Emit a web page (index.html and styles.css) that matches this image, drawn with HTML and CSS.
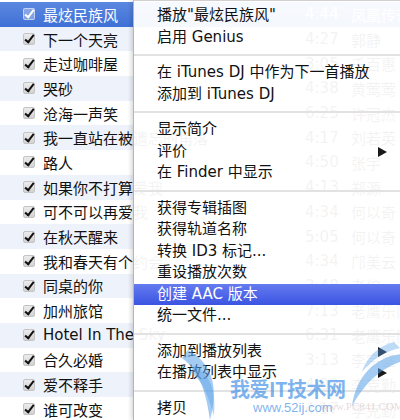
FILE: index.html
```html
<!DOCTYPE html>
<html>
<head>
    <meta charset="utf-8">
    <title>iTunes</title>
    <link rel="stylesheet" href="styles.css">
</head>
<body>
    <div id="songs">
        <div class="row selected"><span class="check"></span><span class="name">最炫民族风</span><span class="time">4:44</span><span class="artist">凤凰传奇</span></div>
        <div class="row"><span class="check"></span><span class="name">下一个天亮</span><span class="time">4:27</span><span class="artist">郭静</span></div>
        <div class="row"><span class="check"></span><span class="name">走过咖啡屋</span><span class="time">3:05</span><span class="artist">千百惠</span></div>
        <div class="row"><span class="check"></span><span class="name">哭砂</span><span class="time">4:38</span><span class="artist">黄莺莺</span></div>
        <div class="row"><span class="check"></span><span class="name">沧海一声笑</span><span class="time">6:25</span><span class="artist">许冠杰</span></div>
        <div class="row"><span class="check"></span><span class="name">我一直站在被遗忘的角落</span><span class="time">4:17</span><span class="artist">刘若英</span></div>
        <div class="row"><span class="check"></span><span class="name">路人</span><span class="time">4:50</span><span class="artist">张宇</span></div>
        <div class="row"><span class="check"></span><span class="name">如果你不打算爱我</span><span class="time">4:13</span><span class="artist">郑源</span></div>
        <div class="row"><span class="check"></span><span class="name">可不可以再爱我</span><span class="time">4:34</span><span class="artist">何以奇</span></div>
        <div class="row"><span class="check"></span><span class="name">在秋天醒来</span><span class="time">5:05</span><span class="artist">何以奇</span></div>
        <div class="row"><span class="check"></span><span class="name">我和春天有个约会</span><span class="time">4:34</span><span class="artist">邝美云</span></div>
        <div class="row"><span class="check"></span><span class="name">同桌的你</span><span class="time">3:48</span><span class="artist">老狼</span></div>
        <div class="row"><span class="check"></span><span class="name">加州旅馆</span><span class="time">7:13</span><span class="artist">老鹰乐队</span></div>
        <div class="row"><span class="check"></span><span class="name">Hotel In The Sky</span><span class="time">6:31</span><span class="artist">老鹰乐队</span></div>
        <div class="row"><span class="check"></span><span class="name">合久必婚</span><span class="time">3:13</span><span class="artist">李宗盛</span></div>
        <div class="row"><span class="check"></span><span class="name">爱不释手</span><span class="time">4:02</span><span class="artist">李克勤</span></div>
        <div class="row"><span class="check"></span><span class="name">谁可改变</span><span class="time">4:17</span><span class="artist">李克勤</span></div>
    </div>

    <div id="menu">
        <div class="item">播放"最炫民族风"</div>
        <div class="item">启用 Genius</div>
        <div class="sep"></div>
        <div class="item">在 iTunes DJ 中作为下一首播放</div>
        <div class="item">添加到 iTunes DJ</div>
        <div class="sep"></div>
        <div class="item">显示简介</div>
        <div class="item sub">评价</div>
        <div class="item">在 Finder 中显示</div>
        <div class="sep"></div>
        <div class="item">获得专辑插图</div>
        <div class="item">获得轨道名称</div>
        <div class="item">转换 ID3 标记...</div>
        <div class="item">重设播放次数</div>
        <div class="item active">创建 AAC 版本</div>
        <div class="item">统一文件...</div>
        <div class="sep"></div>
        <div class="item sub">添加到播放列表</div>
        <div class="item sub">在播放列表中显示</div>
        <div class="sep"></div>
        <div class="item">拷贝</div>
    </div>

    <div id="mark">
        <svg class="wings" width="230" height="90" viewBox="0 0 230 90">
            <path d="M8 18 C30 30 40 52 30 88 C26 60 20 40 2 26 Z" fill="#5aa2ea" opacity="0.55"/>
            <path d="M14 34 C32 44 36 60 34 84 C28 64 24 50 10 40 Z" fill="#5aa2ea" opacity="0.45"/>
            <path d="M222 22 C196 24 176 44 172 74 C186 50 200 36 226 28 Z" fill="#5aa2ea" opacity="0.55"/>
            <path d="M214 10 C198 14 186 26 182 40 C194 26 204 20 220 16 Z" fill="#5aa2ea" opacity="0.4"/>
        </svg>
        <div class="mark-title">我爱IT技术网</div>
        <div class="mark-url">www.52ij.com</div>
        <div class="mark-other">www.PC841.COM</div>
    </div>
</body>
</html>
```

FILE: styles.css
```css
body {
    margin: 0;
    width: 400px;
    height: 420px;
    overflow: hidden;
    position: relative;
    background: #fff;
    color: #111;
    font-family: "DejaVu Sans", "Noto Sans CJK SC", sans-serif;
    font-size: 15px;
}
#songs {
    padding-top: 2px;
}
.row {
    display: flex;
    align-items: center;
    height: 24.7px;
    white-space: nowrap;
}
.row:nth-child(even) {
    background: #eef2fa;
}
.row.selected {
    background: linear-gradient(#5c88e0, #3f70d6);
    color: #fff;
}
.check {
    position: relative;
    flex: none;
    box-sizing: border-box;
    width: 12px;
    height: 12px;
    margin-left: 23px;
    margin-right: 8px;
    border: 1px solid #c4c4c4;
    border-radius: 2px;
    background: linear-gradient(#ececec, #d2d2d2);
}
.check::after {
    content: "";
    position: absolute;
    left: 3px;
    top: -1px;
    width: 3px;
    height: 8px;
    border: solid #111;
    border-width: 0 2.5px 2.5px 0;
    transform: rotate(38deg);
}
.selected .check {
    border-color: rgba(255, 255, 255, 0.5);
    background: rgba(255, 255, 255, 0.3);
}
.selected .check::after {
    border-color: #fff;
}
.name {
    flex: none;
    width: 262px;
    overflow: hidden;
}
.time {
    flex: none;
    width: 40px;
}
.artist {
    padding-left: 6px;
}

#menu {
    position: absolute;
    top: 0;
    left: 133px;
    width: 267px;
    height: 420px;
    box-sizing: border-box;
    padding-top: 4px;
    background: rgba(255, 255, 255, 0.95);
    border-left: 1px solid #b5b5b5;
    border-top: 1px solid #d0d0d0;
    box-shadow: -2px 0 4px rgba(0, 0, 0, 0.15);
}
.item {
    position: relative;
    height: 21.5px;
    line-height: 21.5px;
    padding-left: 23px;
    white-space: nowrap;
}
.item.active {
    background: linear-gradient(#657bf0, #3b54e2);
    color: #fff;
}
.item.sub::after {
    content: "";
    position: absolute;
    right: 13px;
    top: 6px;
    border-left: 9px solid #1a1a1a;
    border-top: 5px solid transparent;
    border-bottom: 5px solid transparent;
}
.sep {
    height: 2px;
    margin: 6px 0;
    background: #e2e2e2;
}

#mark {
    position: absolute;
    left: 180px;
    top: 332px;
    width: 230px;
    height: 90px;
    pointer-events: none;
}
.wings {
    position: absolute;
    left: 0;
    top: 0;
}
.mark-title {
    position: absolute;
    left: 50px;
    top: 42px;
    font-family: "Noto Sans CJK SC", sans-serif;
    font-size: 20px;
    font-weight: bold;
    color: rgba(70, 145, 230, 0.7);
    letter-spacing: -0.5px;
}
.mark-url {
    position: absolute;
    left: 73px;
    top: 68px;
    font-family: "Liberation Sans", sans-serif;
    font-size: 13px;
    color: rgba(70, 145, 230, 0.7);
}
.mark-other {
    position: absolute;
    left: 140px;
    top: 68px;
    font-family: "Liberation Serif", serif;
    font-size: 11px;
    color: rgba(200, 170, 180, 0.45);
}
```
